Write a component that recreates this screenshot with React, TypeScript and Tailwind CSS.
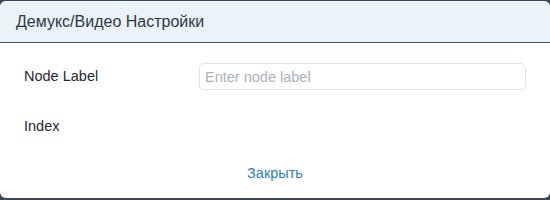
import React from 'react';

export default function App() {
  return (
    <div className="h-[200px] w-[550px] bg-[#3d4852] pt-px font-['Liberation_Sans',Arial,sans-serif]">
      <div className="flex h-[197px] flex-col overflow-hidden rounded-md bg-white">
        {/* Header */}
        <div className="flex h-[42px] shrink-0 items-center border-b border-[#3f4d5c] bg-[#ecf3f8] px-4">
          <h2 className="text-[16px] text-[#2d3748]">Демукс/Видео Настройки</h2>
        </div>

        {/* Body */}
        <div className="flex flex-col px-6 pt-5">
          <div className="flex h-[27px] items-center">
            <label className="w-[175px] text-[14.5px] text-[#1f2937]">Node Label</label>
            <input
              type="text"
              placeholder="Enter node label"
              className="h-[27px] w-[327px] rounded-[5px] border border-[#dde3ea] px-[5px] text-[14.5px] placeholder:text-[#a9b1bd] focus:outline-none"
            />
          </div>
          <div className="mt-[27px] flex h-[20px] items-center">
            <span className="text-[14.5px] text-[#1f2937]">Index</span>
          </div>
        </div>

        {/* Footer */}
        <div className="mt-[26px] flex justify-center">
          <button className="text-[14.5px] text-[#2a7fc1] hover:underline">Закрыть</button>
        </div>
      </div>
    </div>
  );
}
